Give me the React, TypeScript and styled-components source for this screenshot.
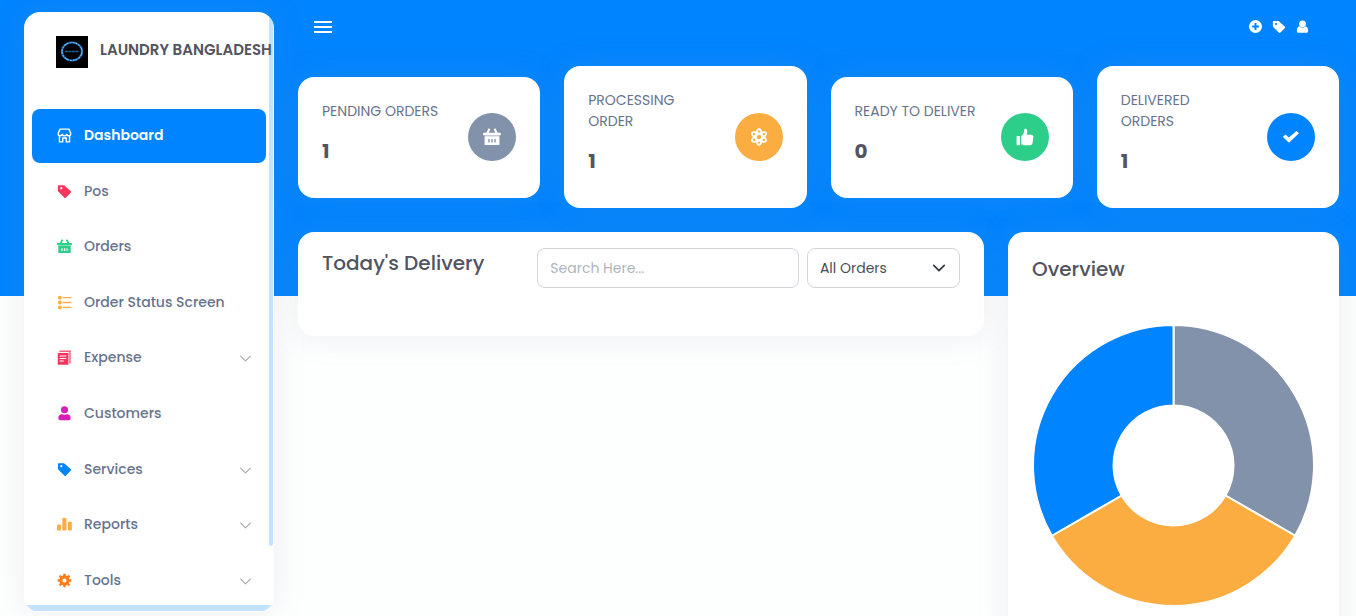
import React from "react";
import styled, { createGlobalStyle } from "styled-components";

const GlobalStyle = createGlobalStyle`
  *, *::before, *::after { box-sizing: border-box; }
  body {
    margin: 0;
    background: #fdfefe;
    color: #525f7f;
    font-family: Poppins, Inter, "Open Sans", sans-serif;
    font-size: 14px;
    line-height: 21px;
  }
  button, input, select { font: inherit; }
  h1, h2, h3, p, ul { margin: 0; padding: 0; }
`;

const Page = styled.div`
  display: grid;
  grid-template-columns: 274px minmax(0, 1fr);
  grid-template-rows: minmax(0, 1fr);
  height: 100vh;
  background: linear-gradient(#0084ff, #0084ff) top / 100% 296px no-repeat;
`;

const Sidebar = styled.aside`
  position: relative;
  display: flex;
  flex-direction: column;
  margin: 12px 0 4px 24px;
  overflow: hidden;
  border-radius: 16px;
  background: #fff;
  box-shadow: 0 0 32px 0 rgba(136, 152, 170, 0.15);
`;

const Brand = styled.a`
  display: flex;
  flex: none;
  gap: 12px;
  padding: 24px 0 0 32px;
  color: #525460;
  font-size: 15px;
  font-weight: 600;
  line-height: 28px;
  white-space: nowrap;
  text-decoration: none;
`;

const NavList = styled.ul`
  display: grid;
  grid-auto-rows: minmax(53px, 1fr);
  gap: 2px;
  flex: 1;
  min-height: 0;
  margin: 41px 8px 5px;
  list-style: none;
`;

const NavLink = styled.a<{ $active?: boolean }>`
  display: flex;
  align-items: center;
  height: 100%;
  padding: 0 14px 0 25px;
  border-radius: 8px;
  background: ${(p) => (p.$active ? "#0084ff" : "transparent")};
  color: ${(p) => (p.$active ? "#fff" : "#67748e")};
  font-weight: ${(p) => (p.$active ? 600 : 500)};
  text-decoration: none;
`;

const NavIcon = styled.span<{ $color: string }>`
  display: flex;
  width: 27px;
  color: ${(p) => p.$color};
`;

const NavLabel = styled.span`
  flex: 1;
`;

const VerticalBar = styled.span`
  position: absolute;
  top: 0;
  right: 1px;
  width: 4px;
  height: 534px;
  border-radius: 0 0 4px 4px;
  background: #0084ff;
  opacity: 0.24;
`;

const HorizontalBar = styled(VerticalBar)`
  top: auto;
  right: 0;
  bottom: 1px;
  left: 0;
  width: auto;
  height: 6px;
  border-radius: 0;
`;

const Main = styled.main`
  padding: 0 17px 0 24px;
  overflow-y: auto;
  scrollbar-width: none;
`;

const TopBar = styled.header`
  display: flex;
  align-items: center;
  justify-content: space-between;
  height: 54px;
  padding: 0 30px 0 16px;
`;

const Actions = styled.nav`
  display: flex;
  gap: 10px;
`;

const IconButton = styled.button`
  display: flex;
  padding: 0;
  border: 0;
  background: none;
  color: #fff;
`;

const StatRow = styled.section`
  display: grid;
  grid-template-columns: repeat(4, minmax(0, 1fr));
  align-items: center;
  gap: 24px;
  margin: 12px 0 24px;
`;

const Card = styled.article`
  border-radius: 16px;
  background: #fff;
  box-shadow: 0 0 32px 0 rgba(136, 152, 170, 0.15);
`;

const StatCard = styled(Card)`
  display: flex;
  align-items: center;
  justify-content: space-between;
  gap: 24px;
  padding: 24px;
`;

const StatTitle = styled.h2`
  color: #67748e;
  font-size: 14px;
  font-weight: 400;
  line-height: 21px;
  text-transform: uppercase;
`;

const StatValue = styled.p`
  margin: 16px 0 10px;
  color: #525460;
  font-size: 20px;
  font-weight: 700;
  line-height: 26px;
`;

const StatBadge = styled.span<{ $color: string }>`
  display: grid;
  flex: none;
  place-items: center;
  width: 48px;
  height: 48px;
  border-radius: 50%;
  background: ${(p) => p.$color};
  color: #fff;
`;

const Panels = styled.section`
  display: grid;
  grid-template-columns: repeat(3, minmax(0, 1fr));
  align-items: start;
  gap: 24px;
`;

const DeliveryCard = styled(Card)`
  display: flex;
  align-items: flex-start;
  gap: 8px;
  grid-column: span 2;
  min-height: 104px;
  padding: 16px 24px;
`;

const PanelTitle = styled.h2`
  color: #525460;
  font-size: 20px;
  font-weight: 500;
  line-height: 30px;
`;

const DeliveryTitle = styled(PanelTitle)`
  flex: 1;
`;

const SearchInput = styled.input`
  width: 41%;
  height: 40px;
  padding: 0 12px;
  border: 1px solid #d2d6da;
  border-radius: 8px;
  outline: 0;
  background: #fff;
  color: #495057;
  &::placeholder { color: #adb5bd; opacity: 1; }
`;

const SelectBox = styled.div`
  position: relative;
  width: 24%;
  color: #343a40;
  svg { position: absolute; top: 13px; right: 14px; pointer-events: none; }
`;

const OrderSelect = styled.select`
  width: 100%;
  height: 40px;
  padding: 0 12px;
  border: 1px solid #d2d6da;
  border-radius: 8px;
  appearance: none;
  background: #fff;
  color: #495057;
`;

const OverviewCard = styled(Card)`
  padding: 22px 24px 40px;
`;

const Chart = styled.svg`
  display: block;
  width: 100%;
  margin-top: 40px;
`;

const icons: Record<string, React.ReactNode> = {
  shop: (
    <g fill="none" stroke="currentColor" strokeWidth="1.5" strokeLinejoin="round">
      <path d="M3.2 1.200h9.600l2 4.900c0 2.800-3.300 2.900-4.400.7-.8 2.100-4 2.100-4.800 0-1.100 2.200-4.400 2.100-4.400-.7z" />
      <path d="M2.600 8.200v6.600h3.500v-4.200h3.800v4.200h3.500V8.200" />
    </g>
  ),
  tag: (
    <path
      fillRule="evenodd"
      d="M1.6 1.2h5.600a1 1 0 0 1 .7.3l6.900 6.200a1 1 0 0 1 0 1.400l-5.400 5.500a1 1 0 0 1-1.400 0L1.300 7.900a1 1 0 0 1-.3-.7V1.800a.6.6 0 0 1 .6-.6zM4.600 3.300a1.200 1.200 0 1 0 0 2.400 1.200 1.200 0 0 0 0-2.400z"
    />
  ),
  basket: (
    <>
      <path d="M4.900.3 3 4.200H.2v2.200h15.600V4.200H13L11.100.3l-1.700.8L10.900 4.200H5.100L6.600 1.100z" />
      <path fillRule="evenodd" d="M1.400 7.300h13.200V15H1.400zM4.700 9.800v3h1.200v-3zm2.700 0v3h1.200v-3zm2.700 0v3h1.200v-3z" />
      <path opacity="0.45" d="M1.400 6.400h13.200v1H1.400z" />
    </>
  ),
  list: (
    <>
      <circle cx="3" cy="2.800" r="2.100" />
      <circle cx="3" cy="8" r="2.100" />
      <circle cx="3" cy="13.200" r="2.100" />
      <path d="M6 2.100h9.300v1.400H6zM6 7.300h9.300v1.400H6zM6 12.500h9.300v1.400H6z" />
    </>
  ),
  receipt: (
    <>
      <path fillRule="evenodd" d="M.8 3.100h11.400V15.600H.8zM2.800 5.800v1.100h7.200V5.800zm0 2.700v1.100h7.200V8.500zm0 2.700v1.100h4.400v-1.100z" />
      <path d="M2.600.6h12.200v1.300H2.600z" />
      <path opacity="0.6" d="M12.700 1.900h2.100v12.600h-2.100z" />
    </>
  ),
  person: (
    <>
      <circle cx="8" cy="4" r="3.800" />
      <path d="M1.400 12.600c0-2.600 2-4 3.900-3.800 1.700.6 3.700.6 5.400 0 1.900-.2 3.900 1.200 3.900 3.800 0 1.800-.7 2.700-2 2.700H3.400c-1.300 0-2-.9-2-2.700z" />
    </>
  ),
  user: (
    <>
      <circle cx="8" cy="4.700" r="4.200" />
      <path d="M4.300 7.600c2 2.200 5.400 2.200 7.400 0 2.300.3 3.300 2.800 3.300 5.600 0 1.500-.8 2.500-2.200 2.500H3.200C1.800 15.700 1 14.700 1 13.200c0-2.800 1-5.300 3.300-5.600z" />
    </>
  ),
  bars: (
    <>
      <rect x="0" y="8" width="4.200" height="6.500" rx="1" />
      <rect x="5.700" y="1" width="4.400" height="13.500" rx="1" />
      <rect x="11.600" y="5" width="4.200" height="9.500" rx="1" />
    </>
  ),
  gear: (
    <>
      <circle cx="8" cy="8" r="3.800" fill="none" stroke="currentColor" strokeWidth="3.200" />
      <path
        fill="none"
        stroke="currentColor"
        strokeWidth="2.700"
        d="M8 .7v2.600M8 12.700v2.600M.7 8h2.600M12.700 8h2.600M2.800 2.800l1.900 1.900M11.300 11.300l1.900 1.900M2.800 13.200l1.900-1.900M11.300 4.700l1.900-1.900"
      />
    </>
  ),
  plus: <path fillRule="evenodd" d="M8 0a8 8 0 1 0 0 16A8 8 0 0 0 8 0zM6.800 3.800h2.400v3h3v2.400h-3v3H6.800v-3h-3V6.800h3z" />,
  atom: (
    <g fill="none" stroke="currentColor" strokeWidth="1.600">
      <ellipse cx="8" cy="8" rx="2.700" ry="7.100" />
      <ellipse cx="8" cy="8" rx="2.700" ry="7.100" transform="rotate(60 8 8)" />
      <ellipse cx="8" cy="8" rx="2.700" ry="7.100" transform="rotate(120 8 8)" />
    </g>
  ),
  thumb: (
    <>
      <rect x="0.500" y="7" width="3" height="8.300" rx="0.700" />
      <path d="M4.600 7.300c2-1.300 2.700-3 2.700-5.500C7.300.2 9.800.2 10 2.400c.1 1.300-.2 2.500-.6 3.600h4.200c1.400 0 2 .9 1.900 2l-.8 5.300c-.2 1.300-1 2-2.200 2H7.400c-1.200 0-2-.5-2.800-.9z" />
    </>
  ),
  check: <path d="M.8 8 3.100 5.700l3 2.700 6.800-5.700 2.200 1.900-8.900 8.500z" />,
};

const Icon = ({ name, size }: { name: string; size: number }) => (
  <svg width={size} height={size} viewBox="0 0 16 16" fill="currentColor" aria-hidden="true">
    {icons[name]}
  </svg>
);

const Chevron = ({ size, width }: { size: number; width: number }) => (
  <svg width={size} height={size} viewBox="0 0 16 16" fill="none" stroke="currentColor" strokeWidth={width} aria-hidden="true">
    <path d="m2 5 6 6 6-6" strokeLinecap="round" strokeLinejoin="round" />
  </svg>
);

const NavChevron = styled.span`
  display: flex;
  padding-top: 2px;
  color: #a4a8ae;
`;

const Logo = () => (
  <svg width="32" height="32" viewBox="0 0 32 32" aria-hidden="true">
    <rect width="32" height="32" fill="#000" />
    <ellipse cx="16" cy="15.500" rx="10" ry="9" fill="none" stroke="#17518f" strokeWidth="2.400" />
    <ellipse cx="16" cy="15.500" rx="10" ry="9" fill="none" stroke="#6bb8f7" strokeWidth="1.200" strokeDasharray="5 1 2 1" />
    <path d="M9 15.500h14" stroke="#256197" strokeWidth="1.500" strokeDasharray="3 .4" />
  </svg>
);

const navItems = [
  { label: "Dashboard", icon: "shop", color: "#fff", active: true },
  { label: "Pos", icon: "tag", color: "#f5365c" },
  { label: "Orders", icon: "basket", color: "#2dce89" },
  { label: "Order Status Screen", icon: "list", color: "#fbad41" },
  { label: "Expense", icon: "receipt", color: "#f5365c", expandable: true },
  { label: "Customers", icon: "person", color: "#d91fb5" },
  { label: "Services", icon: "tag", color: "#0084ff", expandable: true },
  { label: "Reports", icon: "bars", color: "#fbad41", expandable: true },
  { label: "Tools", icon: "gear", color: "#fb7d1b", expandable: true },
];

const stats = [
  { title: "Pending Orders", value: 1, icon: "basket", color: "#8392ab" },
  { title: "Processing Order", value: 1, icon: "atom", color: "#fbad41" },
  { title: "Ready to Deliver", value: 0, icon: "thumb", color: "#2dce89" },
  { title: "Delivered Orders", value: 1, icon: "check", color: "#0084ff" },
];

const polar = (radius: number, degrees: number) => {
  const angle = ((degrees - 90) * Math.PI) / 180;
  return `${141.5 + radius * Math.cos(angle)} ${141.5 + radius * Math.sin(angle)}`;
};

const slice = (start: number) =>
  `M${polar(140.5, start)}A140.5 140.5 0 0 1 ${polar(140.5, start + 120)}L${polar(60, start + 120)}A60 60 0 0 0 ${polar(60, start)}Z`;

export default function App() {
  return (
    <Page>
      <GlobalStyle />
      <Sidebar>
        <Brand href="#">
          <Logo />
          LAUNDRY BANGLADESH
        </Brand>
        <NavList>
          {navItems.map((item) => (
            <li key={item.label}>
              <NavLink href="#" $active={item.active}>
                <NavIcon $color={item.color}>
                  <Icon name={item.icon} size={15} />
                </NavIcon>
                <NavLabel>{item.label}</NavLabel>
                {item.expandable && (
                  <NavChevron>
                    <Chevron size={13} width={1.4} />
                  </NavChevron>
                )}
              </NavLink>
            </li>
          ))}
        </NavList>
        <VerticalBar />
        <HorizontalBar />
      </Sidebar>
      <Main>
        <TopBar>
          <IconButton aria-label="Toggle menu">
            <svg width="18" height="12" viewBox="0 0 18 12" fill="#fff" aria-hidden="true">
              <path d="M0 0h18v2H0zM0 5h18v2H0zM0 10h18v2H0z" />
            </svg>
          </IconButton>
          <Actions>
            <IconButton aria-label="Add order"><Icon name="plus" size={13} /></IconButton>
            <IconButton aria-label="Services"><Icon name="tag" size={14} /></IconButton>
            <IconButton aria-label="Account"><Icon name="user" size={13} /></IconButton>
          </Actions>
        </TopBar>
        <StatRow>
          {stats.map((stat) => (
            <StatCard key={stat.title}>
              <div>
                <StatTitle>{stat.title}</StatTitle>
                <StatValue>{stat.value}</StatValue>
              </div>
              <StatBadge $color={stat.color}>
                <Icon name={stat.icon} size={18} />
              </StatBadge>
            </StatCard>
          ))}
        </StatRow>
        <Panels>
          <DeliveryCard>
            <DeliveryTitle>Today's Delivery</DeliveryTitle>
            <SearchInput type="text" aria-label="Search" placeholder="Search Here..." />
            <SelectBox>
              <OrderSelect aria-label="Order filter">
                <option>All Orders</option>
              </OrderSelect>
              <Chevron size={14} width={2} />
            </SelectBox>
          </DeliveryCard>
          <OverviewCard>
            <PanelTitle>Overview</PanelTitle>
            <Chart viewBox="0 0 283 283" role="img" aria-label="Orders by status">
              <g stroke="#fff" strokeWidth="2">
                <path d={slice(0)} fill="#8392ab" />
                <path d={slice(120)} fill="#fbad41" />
                <path d={slice(240)} fill="#0084ff" />
              </g>
            </Chart>
          </OverviewCard>
        </Panels>
      </Main>
    </Page>
  );
}
